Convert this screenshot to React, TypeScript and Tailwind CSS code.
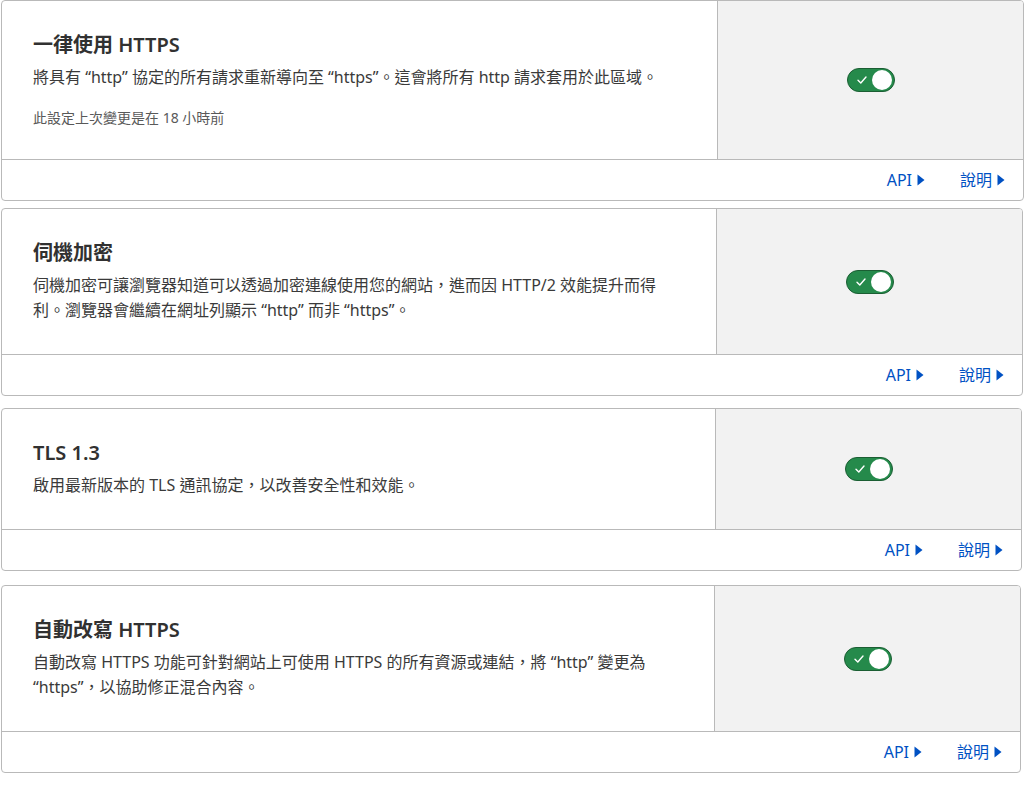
import React from "react";

const settings = [
  {
    title: "一律使用 HTTPS",
    desc: "將具有 “http” 協定的所有請求重新導向至 “https”。這會將所有 http 請求套用於此區域。",
    note: "此設定上次變更是在 18 小時前",
    card: "w-[1023px]",
  },
  {
    title: "伺機加密",
    desc: "伺機加密可讓瀏覽器知道可以透過加密連線使用您的網站，進而因 HTTP/2 效能提升而得利。瀏覽器會繼續在網址列顯示 “http” 而非 “https”。",
    card: "w-[1022px] mt-[7px]",
  },
  {
    title: "TLS 1.3",
    desc: "啟用最新版本的 TLS 通訊協定，以改善安全性和效能。",
    card: "w-[1021px] mt-[12px]",
  },
  {
    title: "自動改寫 HTTPS",
    desc: "自動改寫 HTTPS 功能可針對網站上可使用 HTTPS 的所有資源或連結，將 “http” 變更為 “https”，以協助修正混合內容。",
    card: "w-[1020px] mt-[14px]",
  },
];

function Caret() {
  return (
    <svg width="8" height="12" viewBox="0 0 8 12" className="ml-[5px]">
      <path d="M0.5 0.5 L7.5 6 L0.5 11.5 Z" fill="#0051c3" />
    </svg>
  );
}

function Toggle() {
  return (
    <div className="relative h-6 w-12 rounded-full border border-[#1b5e33] bg-[#258a4b]">
      <svg
        width="10"
        height="8"
        viewBox="0 0 10 8"
        className="absolute left-[9px] top-[7px]"
      >
        <path
          d="M1 4.2 L3.8 7 L9 1"
          fill="none"
          stroke="#ffffff"
          strokeWidth="1.4"
          strokeLinecap="round"
          strokeLinejoin="round"
        />
      </svg>
      <div className="absolute right-[2px] top-[1px] h-5 w-5 rounded-full bg-white" />
    </div>
  );
}

export default function App() {
  return (
    <div
      className="min-h-screen bg-white pl-px text-[#313131]"
      style={{ fontFamily: '"Noto Sans", "Noto Sans CJK TC", sans-serif' }}
    >
      {settings.map((s) => (
        <div
          key={s.title}
          className={`${s.card} overflow-hidden rounded-[4px] border border-[#b9b9b9] bg-white`}
        >
          {/* Main row */}
          <div className="flex border-b border-[#b9b9b9]">
            <div className="flex-1 pl-[31px] pr-[48px] pt-[30px] pb-[31px]">
              <h3 className="text-[20px] font-semibold leading-7 text-[#313131]">
                {s.title}
              </h3>
              <p className="mt-[6px] text-[16px] leading-[25px] text-[#3a3a3a]">
                {s.desc}
              </p>
              {s.note && (
                <p className="mt-[18px] text-[14px] leading-5 text-[#595959]">
                  {s.note}
                </p>
              )}
            </div>
            <div className="flex w-[306px] items-center justify-center border-l border-[#b9b9b9] bg-[#f2f2f2]">
              <Toggle />
            </div>
          </div>

          {/* Footer links */}
          <div className="flex h-10 items-center justify-end gap-[35px] pr-[18px] text-[16px] text-[#0051c3]">
            <a className="flex items-center">
              API
              <Caret />
            </a>
            <a className="flex items-center">
              說明
              <Caret />
            </a>
          </div>
        </div>
      ))}
    </div>
  );
}
